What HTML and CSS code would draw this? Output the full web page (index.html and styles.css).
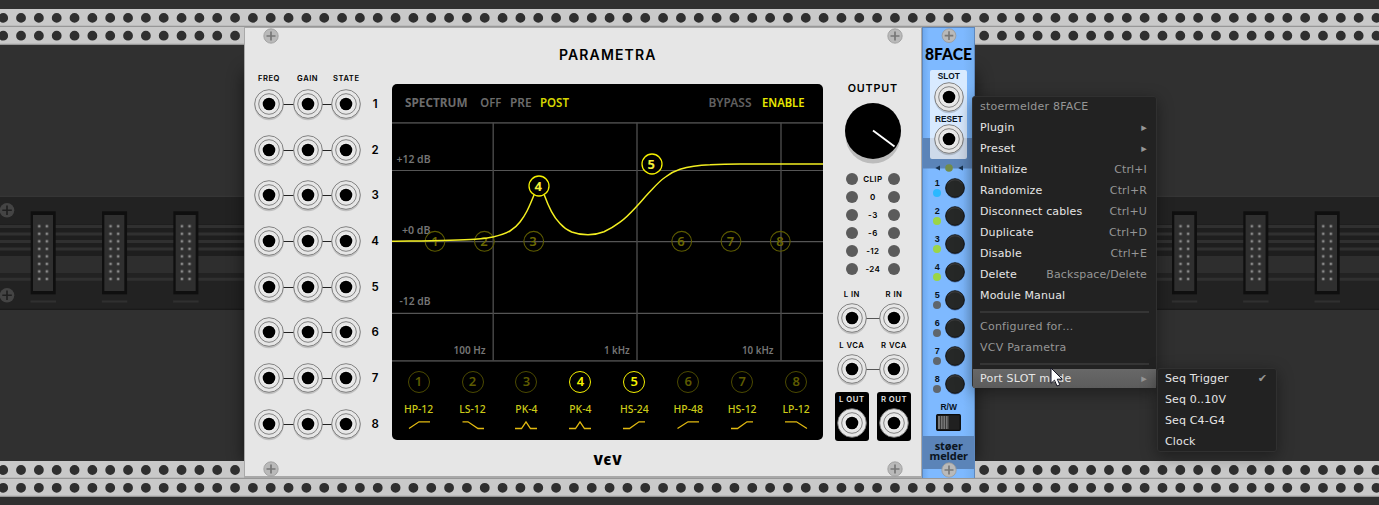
FILE: index.html
```html
<!DOCTYPE html>
<html lang="en">
<head>
<meta charset="utf-8">
<title>VCV Rack – Parametra and 8FACE</title>
<link rel="stylesheet" href="styles.css">
</head>
<body>
<svg class="defs" width="0" height="0" aria-hidden="true">
  <defs>
    <symbol id="screw" viewBox="0 0 16 16"><circle cx="8" cy="8" r="7.2" fill="#b9b9b9" stroke="#999" stroke-width=".8"/><path d="M8 3.5v9M3.5 8h9" stroke="#777" stroke-width="1.7"/></symbol>
    <symbol id="jack" viewBox="0 0 34 34"><circle cx="17" cy="18.6" r="14.6" fill="#000" opacity=".16"/><circle cx="17" cy="17" r="14.3" fill="#e6e6e6" stroke="#777" stroke-width=".9"/><circle cx="17" cy="17" r="10.3" fill="#e6e6e6" stroke="#777" stroke-width=".9"/><circle cx="17" cy="17" r="7.6" fill="#f0f0f0"/><circle cx="17" cy="17" r="6.3" fill="#000"/></symbol>
    <symbol id="dial" viewBox="0 0 22 22"><circle cx="11" cy="11.7" r="9.7" fill="#4a72aa"/><circle cx="11" cy="11" r="9.3" fill="#262827" stroke="#111" stroke-width=".9"/><path d="M4 6.500A8.500 8.500 0 0 1 18 6.500" fill="none" stroke="#454545" stroke-width=".8"/></symbol>
  </defs>
</svg>
<main class="rack">
  <svg class="backdrop" viewBox="0 0 1379 505" width="1379" height="505" aria-hidden="true">
    <defs>
      <pattern id="pins" x="35.400" y="222.500" width="7.600" height="7.530" patternUnits="userSpaceOnUse"><rect x="2.600" y="2.500" width="2.500" height="2.500" fill="#8a8a8a"/></pattern>
      <g id="header"><rect x="30.700" y="211.300" width="25" height="83" fill="#0f0f0f"/><rect x="33" y="215" width="20" height="76" fill="#2f2f2f"/><rect x="35.400" y="222.500" width="15.200" height="60.200" fill="url(#pins)"/><path d="M30.500 301.500h25.500" stroke="#303030" stroke-width="2.200"/></g>
      <filter id="soft" x="-20%" y="-20%" width="140%" height="140%"><feGaussianBlur stdDeviation="9"/></filter>
    </defs>
    <rect width="1379" height="505" fill="#303030"/>
    <rect y="196" width="1379" height="113" fill="#222"/>
    <path d="M0 196.300h1379" stroke="#3b3b3b"/>
    <path d="M0 309.300h1379" stroke="#161616"/>
    <rect y="224" width="1379" height="32" fill="#1e1e1e"/>
    <path d="M0 226.500h1379M0 234h1379M0 241.500h1379M0 249h1379M0 279.300h1379" stroke="#303030" stroke-width="3"/>
    <rect y="256" width="1379" height="17" fill="#2e2e2e"/>
    <use href="#header"/><use href="#header" x="71.330"/><use href="#header" x="142.660"/>
    <use href="#header" x="1141.300"/><use href="#header" x="1212.600"/><use href="#header" x="1284"/>
    <g fill="#444"><circle cx="7" cy="210.300" r="7.300"/><circle cx="7" cy="295.300" r="7.300"/></g>
    <path d="M7 205.500v9.500M2.300 210.300h9.500M7 290.500v9.500M2.300 295.300h9.500" stroke="#1f1f1f" stroke-width="1.600"/>
    <rect x="245" y="72" width="730" height="390" fill="#000" opacity=".6" filter="url(#soft)"/>
    <rect y="9" width="1379" height="36" fill="#c9c9c9"/>
    <rect y="461" width="1379" height="36" fill="#c9c9c9"/>
    <path d="M0 26.300h1379M0 44.400h1379M0 478.400h1379M0 496.400h1379" stroke="#979797" stroke-width="1.200"/>
    <path d="M3.200 17.900H1390M3.200 35.700H1390M3.200 470H1390M3.200 487.800H1390" stroke="#2f2f2f" stroke-width="9.800" stroke-linecap="round" stroke-dasharray="0 17.835"/>
  </svg>

  <div class="modules">
    <section class="parametra">
      <header class="plate-top"><svg class="screw"><use href="#screw"/></svg><h1>PARAMETRA</h1><svg class="screw"><use href="#screw"/></svg></header>
      <div class="plate-body">
        <div class="inputs">
          <div class="input-head"><span>FREQ</span><span>GAIN</span><span>STATE</span></div>
          <div class="input-row"><svg class="jack"><use href="#jack"/></svg><svg class="jack"><use href="#jack"/></svg><svg class="jack"><use href="#jack"/></svg><b>1</b></div>
          <div class="input-row"><svg class="jack"><use href="#jack"/></svg><svg class="jack"><use href="#jack"/></svg><svg class="jack"><use href="#jack"/></svg><b>2</b></div>
          <div class="input-row"><svg class="jack"><use href="#jack"/></svg><svg class="jack"><use href="#jack"/></svg><svg class="jack"><use href="#jack"/></svg><b>3</b></div>
          <div class="input-row"><svg class="jack"><use href="#jack"/></svg><svg class="jack"><use href="#jack"/></svg><svg class="jack"><use href="#jack"/></svg><b>4</b></div>
          <div class="input-row"><svg class="jack"><use href="#jack"/></svg><svg class="jack"><use href="#jack"/></svg><svg class="jack"><use href="#jack"/></svg><b>5</b></div>
          <div class="input-row"><svg class="jack"><use href="#jack"/></svg><svg class="jack"><use href="#jack"/></svg><svg class="jack"><use href="#jack"/></svg><b>6</b></div>
          <div class="input-row"><svg class="jack"><use href="#jack"/></svg><svg class="jack"><use href="#jack"/></svg><svg class="jack"><use href="#jack"/></svg><b>7</b></div>
          <div class="input-row"><svg class="jack"><use href="#jack"/></svg><svg class="jack"><use href="#jack"/></svg><svg class="jack"><use href="#jack"/></svg><b>8</b></div>
        </div>

        <div class="screen">
          <svg class="plot" viewBox="392 84 432 278" width="432" height="278">
            <g class="screen-text" font-size="11.6">
              <text x="405" y="107" font-weight="700" textLength="62.500" lengthAdjust="spacingAndGlyphs" fill="#6c6c6c">SPECTRUM</text>
              <text x="480.300" y="107" textLength="21" lengthAdjust="spacingAndGlyphs" fill="#6c6c6c">OFF</text>
              <text x="510" y="107" textLength="21.500" lengthAdjust="spacingAndGlyphs" fill="#6c6c6c">PRE</text>
              <text x="540" y="107" font-weight="600" textLength="29" lengthAdjust="spacingAndGlyphs" fill="#d6d600">POST</text>
              <text x="708.500" y="107" textLength="43" lengthAdjust="spacingAndGlyphs" fill="#606060">BYPASS</text>
              <text x="762" y="107" textLength="42.500" lengthAdjust="spacingAndGlyphs" fill="#e8e800">ENABLE</text>
            </g>
            <path d="M392 122.800h432M392 360.800h432" stroke="#404040" stroke-width="1.800"/>
            <path d="M392 170.500h432M392 241.700h432M392 313.400h432" stroke="#555" stroke-width="1.200"/>
            <path d="M493.200 122.500v238M637 122.500v238M781 122.500v238" stroke="#4a4a4a" stroke-width="1.400"/>
            <g class="screen-text" font-size="10.6" fill="#757575">
              <text x="396.500" y="162.700" textLength="34" lengthAdjust="spacingAndGlyphs">+12 dB</text><text x="402" y="233.600" textLength="28.500" lengthAdjust="spacingAndGlyphs">+0 dB</text><text x="399.500" y="305.400" textLength="31" lengthAdjust="spacingAndGlyphs">-12 dB</text>
              <text x="453.500" y="354.300" textLength="32" lengthAdjust="spacingAndGlyphs">100 Hz</text><text x="604" y="354.300" textLength="25.700" lengthAdjust="spacingAndGlyphs">1 kHz</text><text x="742" y="354.300" textLength="31.500" lengthAdjust="spacingAndGlyphs">10 kHz</text>
            </g>
            <g class="screen-text marker" stroke="#5d5b00" font-size="13">
              <circle cx="435" cy="241.300" r="9.900"/><circle cx="484.400" cy="241.300" r="9.900"/><circle cx="533.700" cy="241.300" r="9.900"/><circle cx="681.700" cy="241.300" r="9.900"/><circle cx="731" cy="241.300" r="9.900"/><circle cx="780.300" cy="241.300" r="9.900"/>
              <g stroke="none" fill="#6c6900" text-anchor="middle"><text x="435" y="246">1</text><text x="484" y="246">2</text><text x="533" y="246">3</text><text x="681" y="246">6</text><text x="730.500" y="246">7</text><text x="780" y="246">8</text></g>
            </g>
            <path d="M392 241.200C425 240.800 455 240.800 475 239.200C484 238.400 488 238 493 236.900C500 235.500 505 234 510 231C514 228.500 517 226 520 222C523 218 525 215 527 211C530 205 532 200 534 195M544.300 195C546.500 201 548.500 206 551.500 211.700C554 216.500 556.500 220 560 223.500C563.500 227.500 567 230 571.700 232C577 234 582 234.800 588 234.800C594 234.700 599 233.800 604 231.800C610 229 615 226 620 222.200C627 217 631 212.500 637 206C642 200.500 647 194.500 652 189.500C657 184 661 180 665.500 177C670 173.500 674 171.200 680 169.300C690 166 699 165 710 164.700C720 164.200 728 164 740 164H824" fill="none" stroke="#f2ee20" stroke-width="1.500"/>
            <g class="screen-text" font-size="13" font-weight="700" text-anchor="middle"><circle cx="539" cy="186" r="10" fill="#000" stroke="#f4f000" stroke-width="1.300"/><circle cx="652" cy="164" r="10" fill="#000" stroke="#f4f000" stroke-width="1.300"/><text x="538.300" y="190.700" fill="#f4f03a">4</text><text x="651.300" y="168.700" fill="#f4f03a">5</text></g>
          </svg>
          <div class="bands">
            <div class="band"><i>1</i><span>HP-12</span><svg viewBox="0 0 24 10"><path d="M2 8.500L12 1.800H23"/></svg></div>
            <div class="band"><i>2</i><span>LS-12</span><svg viewBox="0 0 24 10"><path d="M1.500 1.800H7L17 8.500H23"/></svg></div>
            <div class="band"><i>3</i><span>PK-4</span><svg viewBox="0 0 24 10"><path d="M1 8.500H7.500L12 1.800L16.500 8.500H23"/></svg></div>
            <div class="band on"><i>4</i><span>PK-4</span><svg viewBox="0 0 24 10"><path d="M1 8.500H7.500L12 1.800L16.500 8.500H23"/></svg></div>
            <div class="band on"><i>5</i><span>HS-24</span><svg viewBox="0 0 24 10"><path d="M1 8.500H7.500L17 1.800H23"/></svg></div>
            <div class="band"><i>6</i><span>HP-48</span><svg viewBox="0 0 24 10"><path d="M1.500 8.500L12 1.800H23"/></svg></div>
            <div class="band"><i>7</i><span>HS-12</span><svg viewBox="0 0 24 10"><path d="M1 8.500H7.500L17 1.800H23"/></svg></div>
            <div class="band"><i>8</i><span>LP-12</span><svg viewBox="0 0 24 10"><path d="M1 1.800H12.500L23 8.500"/></svg></div>
          </div>
        </div>

        <div class="outputs">
          <h2>OUTPUT</h2>
          <svg class="level" viewBox="0 0 60 66" width="60" height="66"><circle cx="30" cy="36" r="27.500" fill="#bcbcbc"/><circle cx="30" cy="31" r="28" fill="#000"/><path d="M30 30.500L51.500 46.500" stroke="#fff" stroke-width="1.900"/></svg>
          <div class="meter">
            <div><i></i><span>CLIP</span><i></i></div><div><i></i><span>0</span><i></i></div><div><i></i><span>-3</span><i></i></div><div><i></i><span>-6</span><i></i></div><div><i></i><span>-12</span><i></i></div><div><i></i><span>-24</span><i></i></div>
          </div>
          <div class="ports">
            <div class="port-pair"><span>L IN</span><span>R IN</span><svg class="jack"><use href="#jack"/></svg><svg class="jack"><use href="#jack"/></svg></div>
            <div class="port-pair"><span>L VCA</span><span>R VCA</span><svg class="jack"><use href="#jack"/></svg><svg class="jack"><use href="#jack"/></svg></div>
            <div class="out-pair"><div><span>L OUT</span><svg class="jack"><use href="#jack"/></svg></div><div><span>R OUT</span><svg class="jack"><use href="#jack"/></svg></div></div>
          </div>
        </div>
      </div>
      <footer class="plate-bottom"><svg class="screw"><use href="#screw"/></svg><strong>V<em>Є</em>V</strong><svg class="screw"><use href="#screw"/></svg></footer>
    </section>

    <section class="eightface">
      <svg class="screw"><use href="#screw"/></svg>
      <svg class="face-title" viewBox="0 0 52 24" width="52" height="24"><text x="2" y="18" textLength="47" lengthAdjust="spacingAndGlyphs">8FACE</text></svg>
      <div class="face-ports"><span>SLOT</span><svg class="jack"><use href="#jack"/></svg><span>RESET</span><svg class="jack"><use href="#jack"/></svg></div>
      <svg class="direction" viewBox="0 0 30 10" width="30" height="10"><path d="M6 2.500L1.300 5L6 7.500zM29 2.500L24.300 5L29 7.500z" fill="#18324e"/><circle cx="15" cy="5" r="3.800" fill="#728c4a"/></svg>
      <div class="slots">
        <div class="slot now"><span>1<i></i></span><svg><use href="#dial"/></svg></div>
        <div class="slot used"><span>2<i></i></span><svg><use href="#dial"/></svg></div>
        <div class="slot used"><span>3<i></i></span><svg><use href="#dial"/></svg></div>
        <div class="slot used"><span>4<i></i></span><svg><use href="#dial"/></svg></div>
        <div class="slot"><span>5<i></i></span><svg><use href="#dial"/></svg></div>
        <div class="slot"><span>6<i></i></span><svg><use href="#dial"/></svg></div>
        <div class="slot"><span>7<i></i></span><svg><use href="#dial"/></svg></div>
        <div class="slot"><span>8<i></i></span><svg><use href="#dial"/></svg></div>
      </div>
      <span class="rw">R/W</span>
      <svg class="switch" viewBox="0 0 25 17" width="25" height="17"><rect x=".7" y=".7" width="23.600" height="15.600" rx="1" fill="#202020" stroke="#0b0b0b" stroke-width="1.300"/><rect x="2" y="2" width="10.500" height="13" fill="#777"/><path d="M4.500 2v13M7 2v13M9.500 2v13M12 2v13" stroke="#333" stroke-width=".9"/></svg>
      <div class="brand"><span>støer</span><span>melder</span></div>
      <svg class="screw low"><use href="#screw"/></svg>
    </section>
  </div>

  <nav class="menu module-menu">
    <div class="item muted"><span>stoermelder 8FACE</span></div>
    <div class="item"><span>Plugin</span><kbd class="arrow">▸</kbd></div>
    <div class="item"><span>Preset</span><kbd class="arrow">▸</kbd></div>
    <div class="item"><span>Initialize</span><kbd>Ctrl+I</kbd></div>
    <div class="item"><span>Randomize</span><kbd>Ctrl+R</kbd></div>
    <div class="item"><span>Disconnect cables</span><kbd>Ctrl+U</kbd></div>
    <div class="item"><span>Duplicate</span><kbd>Ctrl+D</kbd></div>
    <div class="item"><span>Disable</span><kbd>Ctrl+E</kbd></div>
    <div class="item"><span>Delete</span><kbd>Backspace/Delete</kbd></div>
    <div class="item"><span>Module Manual</span></div>
    <hr>
    <div class="item muted"><span>Configured for…</span></div>
    <div class="item muted"><span>VCV Parametra</span></div>
    <hr>
    <div class="item active"><span>Port SLOT mode</span><kbd class="arrow">▸</kbd></div>
  </nav>
  <nav class="menu sub-menu">
    <div class="item"><span>Seq Trigger</span><kbd class="check">✔</kbd></div>
    <div class="item"><span>Seq 0..10V</span></div>
    <div class="item"><span>Seq C4-G4</span></div>
    <div class="item"><span>Clock</span></div>
  </nav>
  <svg class="cursor" viewBox="0 0 14 21" width="14" height="21"><path d="M1 1V16.300L4.500 13.200L7 19L9.800 17.800L7.300 12.200H12.200z" fill="#fff" stroke="#151525" stroke-width="1"/></svg>
</main>
</body>
</html>
```

FILE: styles.css
```css
* { box-sizing: border-box; }
body { margin: 0; background: #303030; overflow: hidden; }
svg { display: block; }
.defs { position: absolute; }
.rack { position: relative; display: grid; width: 1379px; height: 505px; overflow: hidden; }
.backdrop, .modules { grid-area: 1 / 1; }
.modules { z-index: 1; display: flex; align-items: flex-start; padding: 27px 0 0 244.3px; }
.screw { width: 16px; height: 16px; }
.jack { width: 34px; height: 34px; }

/* Parametra */
.parametra { width: 677.7px; height: 451px; background: #e6e6e6; border: 1px solid #a9a9a9; border-width: 1px 1px 2px; color: #000; font-family: Inter, sans-serif; font-weight: 600; }
.plate-top { display: flex; justify-content: space-between; height: 42px; padding: 0 18.1px 0 17.4px; }
.plate-top h1 { margin: 18px 0 0 50px; font-size: 14px; line-height: 17px; font-weight: 600; letter-spacing: 1.15px; }
.plate-body { display: flex; height: 372px; }
.inputs { flex: none; width: 146.7px; padding-left: 4.4px; }
.input-head { display: grid; grid-template-columns: repeat(3, 38.65px); height: 11.4px; padding-top: 3px; text-align: center; font-size: 7.6px; line-height: 11px; letter-spacing: .55px; }
.input-row { display: grid; grid-template-columns: repeat(3, 38.65px) 19px; align-items: center; justify-items: center; height: 45.64px; background: linear-gradient(#222, #222) 20px 22.8px / 77px 1px no-repeat; }
.input-row b { font-size: 11.5px; font-weight: 600; }
.screen { flex: none; width: 431.4px; height: 356.4px; margin-top: 14px; background: #000; border-radius: 5px; overflow: hidden; font-family: "Noto Sans", sans-serif; }
.screen-text { font-family: "Noto Sans", sans-serif; }
.marker circle { fill: none; stroke-width: 1.1; }
.bands { display: grid; grid-template-columns: repeat(8, 53.95px); padding-top: 9px; margin-left: -.4px; }
.band { display: flex; flex-direction: column; align-items: center; color: #cccb18; }
.band i { width: 22px; height: 22px; border: 1.5px solid #4c4a00; border-radius: 50%; color: #5d5b00; font: 600 13px/18.5px "Noto Sans", sans-serif; text-align: center; }
.band.on i { border-color: #f4f000; color: #f4f000; }
.band span { height: 16px; margin-top: 8px; font-size: 10.4px; line-height: 17px; font-weight: 500; }
.band svg { width: 24px; height: 10px; margin-top: 3px; fill: none; stroke: #e2ba10; stroke-width: 1.3; }
.outputs { flex: none; display: flex; flex-direction: column; align-items: center; width: 84.4px; margin-left: 7.3px; }
.outputs h2 { margin: 11px 0 0; font-size: 10.8px; line-height: 16px; font-weight: 600; letter-spacing: .8px; }
.level { margin-top: 3px; }
.meter { width: 54px; margin-top: 4px; }
.meter div { display: flex; justify-content: space-between; align-items: center; height: 18px; font-size: 8px; letter-spacing: .4px; }
.meter i { width: 12px; height: 12px; border-radius: 50%; background: #5b5b5b; }
.ports { width: 84.4px; margin-top: 11px; font-size: 7.7px; letter-spacing: .5px; text-align: center; line-height: 12px; }
.port-pair { display: grid; grid-template-columns: 1fr 1fr; grid-template-rows: 10px 34px; row-gap: 3px; justify-items: center; height: 51px; background: linear-gradient(#555, #555) 21px 29px / 42px 1px no-repeat; }
.port-pair span, .out-pair span { height: 10px; }
.port-pair .jack { margin-top: -.7px; }
.out-pair { display: flex; gap: 8px; padding: 0 4px; margin-top: .7px; }
.out-pair div { display: flex; flex-direction: column; align-items: center; width: 34.2px; height: 49.5px; padding-top: 2.5px; border-radius: 3px; background: #000; color: #e6e6e6; white-space: nowrap; }
.out-pair .jack { margin-top: 2px; }
.plate-bottom { display: flex; justify-content: space-between; height: 34px; padding: 19.4px 18.1px 0 17.4px; }
.plate-bottom strong { margin: -9px 0 0 50px; font-size: 12.5px; line-height: 16px; font-weight: 900; letter-spacing: .5px; }
.plate-bottom em { font: 900 12px "Noto Sans", sans-serif; }

/* 8FACE */
.eightface { display: flex; flex-direction: column; align-items: center; width: 53.5px; height: 451px; border: 1px solid #5d88bf; border-width: 1px 1px 0; background: linear-gradient(#5b84b8, #5b84b8) 0 110px / 100% 30.5px no-repeat, linear-gradient(#5b84b8, #5b84b8) 0 408px / 100% 33px no-repeat, linear-gradient(90deg, #6ea9ef, #7eb9ff 6px, #7eb9ff 40px, #76afef); color: #08131f; font-family: "Liberation Sans", sans-serif; font-weight: 700; }
.face-title { flex: none; margin-top: -1.5px; overflow: visible; font: 900 17.5px Lato, sans-serif; fill: #000; }
.face-ports { flex: none; display: flex; flex-direction: column; align-items: center; width: 37px; height: 89px; margin-top: 4px; padding-top: 2.5px; border-radius: 2px; background: rgba(255, 255, 255, .7); font-size: 8.3px; line-height: 9px; }
.face-ports .jack { flex: none; margin-top: -1.5px; }
.face-ports span + .jack + span { margin-top: 1px; }
.direction { flex: none; margin-top: 4.5px; }
.slots { flex: none; margin: .7px 0 0 0; }
.slot { display: flex; align-items: center; gap: .8px; height: 28px; }
.slot span { display: flex; flex-direction: column; align-items: center; width: 11px; font-size: 9px; line-height: 9px; }
.slot span i { width: 8px; height: 8px; margin-top: 1.5px; border-radius: 50%; background: #5f666d; }
.slot.used i { background: #9bd546; }
.slot.now i { background: #2bb8ff; }
.slot svg { width: 22px; height: 22px; }
.rw { margin-top: 4px; font-size: 8.5px; line-height: 10px; }
.switch { flex: none; margin-top: 2px; }
.brand { display: flex; flex: none; flex-direction: column; align-items: center; gap: 1.5px; height: 23px; margin-top: 9.5px; font: 700 11px/9px "Noto Sans", sans-serif; color: #0b1520; letter-spacing: -.1px; }
.screw.low { margin-top: -1.5px; flex: none; }

/* Context menus */
.menu { position: absolute; z-index: 2; border: 1px solid #303030; border-radius: 3px; background: #222; box-shadow: 0 4px 16px rgba(0, 0, 0, .4); color: #e6e6e6; font: 11px/21px "DejaVu Sans", sans-serif; letter-spacing: .24px; }
.module-menu { left: 972px; top: 96px; width: 185px; height: 292px; }
.sub-menu { left: 1157px; top: 368px; width: 120px; height: 84px; }
.item { display: flex; justify-content: space-between; height: 21px; padding: 0 9px 0 7px; line-height: 19px; white-space: nowrap; }
.item kbd { font: inherit; color: #969696; letter-spacing: .12px; }
.menu hr { height: 2px; margin: 4px 7px 4px; border: 0; background: #353535; }
.item:not(.muted):not(.active) span { letter-spacing: .14px; }
.item.muted { color: #969696; }
.item.active { height: 19px; background: linear-gradient(#686868, #5c5c5c); }
.cursor { position: absolute; z-index: 3; left: 1050px; top: 367px; }
```
